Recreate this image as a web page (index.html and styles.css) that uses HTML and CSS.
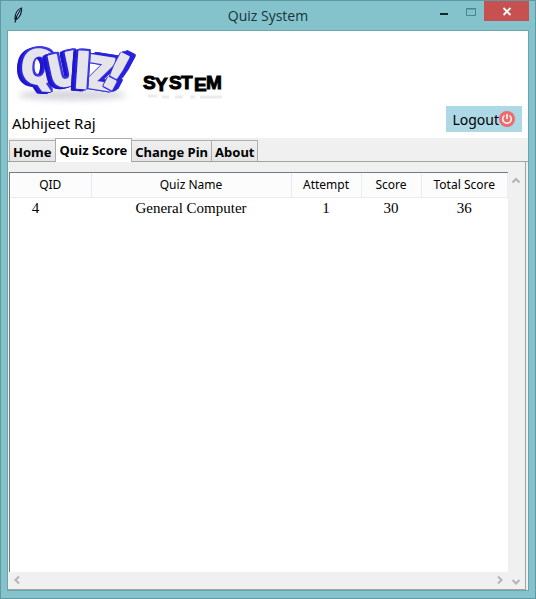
FILE: index.html
```html
<!DOCTYPE html>
<html lang="en">
<head>
<meta charset="utf-8">
<title>Quiz System</title>
<link rel="stylesheet" href="styles.css">
</head>
<body>
<div class="window">
  <header class="titlebar">
    <svg class="feather" viewBox="0 0 10 16" aria-hidden="true">
      <path d="M8.500 1C5 2 2 6 2 12L4 12C7 10 9 5 8.500 1Z" fill="#a9d4ee" stroke="#12202c" stroke-width="1.3"/>
      <path d="M7.500 2.500C5 6 3 10 2 15.500" fill="none" stroke="#0c1720" stroke-width="1.2"/>
    </svg>
    <h1 class="caption">Quiz System</h1>
    <div class="controls">
      <button class="control" type="button" aria-label="Minimize"><svg viewBox="0 0 26 20"><path d="M8 13H16" stroke="#14282b" stroke-width="2"/></svg></button>
      <button class="control" type="button" aria-label="Maximize"><svg viewBox="0 0 26 20"><path d="M8.500 7.500H17.500V14.500H8.500ZM8 8H18" fill="none" stroke="#4b858c"/></svg></button>
      <button class="control close" type="button" aria-label="Close"><svg viewBox="0 0 45 20"><path d="M19.500 7L26.500 14M26.500 7L19.500 14" stroke="#fff" stroke-width="1.8"/></svg></button>
    </div>
  </header>
  <main class="client">
    <section class="banner">
      <svg class="logo" viewBox="0 0 224 75" role="img" aria-label="Quiz! System">
        <defs>
          <filter id="soft" x="-20%" y="-150%" width="140%" height="400%"><feGaussianBlur stdDeviation="3"/></filter>
        </defs>
        <ellipse cx="64" cy="64" rx="54" ry="5" fill="#d4d4da" filter="url(#soft)"/>
        <g class="left">
          <text class="letter q" x="13" y="52" transform="rotate(5 28 36)">Q</text>
        </g>
        <g class="left">
          <text class="letter u" x="40" y="55" transform="rotate(-12 54 38)">U</text>
        </g>
        <g class="right">
          <text class="letter z" x="78" y="57" transform="rotate(9 88 38)">Z</text>
        </g>
        <g class="left">
          <text class="letter i" x="66" y="57" transform="rotate(4 72 38)">I</text>
        </g>
        <g class="right">
          <text class="letter bang" x="99" y="57" transform="rotate(28 106 38)">!</text>
        </g>
        <path d="M140 65H149M154 66H161M167 66H175M182 66H187M192 66H214" fill="none" stroke="#ececec" stroke-width="3"/>
        <text class="system" x="135 147 161 173 186 198" y="58 60 58 58 60 58">SYSTEM</text>
      </svg>
      <div class="account">
        <p class="user">Abhijeet Raj</p>
        <button class="logout" type="button">Logout<svg viewBox="0 0 16 16" aria-hidden="true"><circle cx="8" cy="8" r="8" fill="#f0696b"/><path d="M5.500 4.500A4.300 4.300 0 1 0 10.500 4.500M8 3V8" fill="none" stroke="#fff" stroke-width="1.500"/></svg></button>
      </div>
    </section>
    <nav class="tabs" role="tablist">
      <button class="tab" type="button" role="tab">Home</button>
      <button class="tab active" type="button" role="tab" aria-selected="true">Quiz Score</button>
      <button class="tab" type="button" role="tab">Change Pin</button>
      <button class="tab" type="button" role="tab">About</button>
    </nav>
    <section class="page">
      <div class="tree">
        <table class="scores">
          <colgroup><col class="c-id"><col class="c-name"><col class="c-attempt"><col class="c-score"><col></colgroup>
          <thead><tr><th>QID</th><th>Quiz Name</th><th>Attempt</th><th>Score</th><th>Total Score</th></tr></thead>
          <tbody><tr><td class="first">4</td><td>General Computer</td><td>1</td><td>30</td><td>36</td></tr></tbody>
        </table>
      </div>
      <div class="vbar">
        <button class="arrow" type="button" aria-label="Scroll up"><svg viewBox="0 0 16 16"><path d="M4.500 10.500L8 7L11.500 10.500"/></svg></button>
        <button class="arrow" type="button" aria-label="Scroll down"><svg viewBox="0 0 16 16"><path d="M4.500 7L8 10.500L11.500 7"/></svg></button>
      </div>
      <div class="hbar">
        <button class="arrow" type="button" aria-label="Scroll left"><svg viewBox="0 0 16 16"><path d="M10 4.500L6.500 8L10 11.500"/></svg></button>
        <button class="arrow" type="button" aria-label="Scroll right"><svg viewBox="0 0 16 16"><path d="M6 4.500L9.500 8L6 11.500"/></svg></button>
      </div>
    </section>
  </main>
</div>
</body>
</html>
```
FILE: styles.css
```css
* { box-sizing: border-box; }

body {
  margin: 0;
  font-family: "Noto Sans", "Open Sans", sans-serif;
  color: #000;
}

button {
  margin: 0;
  padding: 0;
  border: 0;
  background: none;
  font: inherit;
  color: inherit;
}

svg { display: block; }

.window {
  display: flex;
  flex-direction: column;
  min-height: 100vh;
  padding: 0 6px 7px;
  border: 1px solid #5f9aa2;
  background: #84c3cb;
}

/* Title bar */
.titlebar {
  display: grid;
  grid-template-columns: 1fr auto 1fr;
  height: 29px;
}

.feather {
  width: 10px;
  height: 16px;
  margin: 6px 0 0 6px;
}

.caption {
  margin: 0;
  font: 14px/29px "Open Sans", sans-serif;
  color: #17353a;
}

.controls {
  display: flex;
  justify-content: flex-end;
  align-items: flex-start;
}

.control { width: 26px; height: 20px; }
.control svg { width: 100%; height: 100%; }
.close { width: 45px; background: #c75050; }

/* Client area */
.client {
  display: flex;
  flex: 1;
  flex-direction: column;
  border: 1px solid #6da3aa;
  background: #f0f0f0;
}

.banner {
  display: flex;
  flex-direction: column;
  height: 107px;
  background: #fff;
}

.logo { width: 224px; height: 75px; overflow: visible; }

/* Light letter faces; the blue sides are stacked shadows */
.letter {
  font-family: "Liberation Sans Narrow", "DejaVu Sans Condensed", sans-serif;
  font-weight: bold;
  fill: #e4e4ea;
  stroke: #e4e4ea;
  stroke-width: 2px;
  stroke-linejoin: round;
}

.q { font-size: 46px; }
.u { font-size: 44px; }
.i { font-size: 50px; }
.z { font-size: 44px; }
.bang { font-size: 50px; }

.left {
  filter: drop-shadow(2px 0 0 #3a35e6) drop-shadow(0 -2px 0 #3a35e6) drop-shadow(-2px 1px 0 #2a22dc) drop-shadow(-3px 1px 0 #1d16cc);
}

.right {
  filter: drop-shadow(-1px 0 0 #3a35e6) drop-shadow(0 1px 0 #3a35e6) drop-shadow(2px -1px 0 #2a22dc) drop-shadow(4px -1px 0 #2a22dc);
}

.system {
  font: bold 19px "Liberation Sans", sans-serif;
  stroke: #000;
  stroke-width: 1px;
}

.account {
  display: flex;
  flex: 1;
  justify-content: space-between;
  padding: 0 6px 4px 4px;
}

.user { margin: 0; align-self: flex-end; font-size: 15px; line-height: 22px; }

.logout {
  display: flex;
  align-items: center;
  height: 26px;
  padding: 0 7px 0 6px;
  background: #add8e6;
  font-size: 14px;
}

.logout svg { width: 16px; height: 16px; }

/* Tabs */
.tabs {
  display: flex;
  align-items: flex-end;
  height: 24px;
  padding-left: 1px;
  border-bottom: 1px solid #a0a5a0;
}

.tab {
  height: 21px;
  padding: 0 3px;
  border: 1px solid #acacac;
  border-width: 1px 1px 0;
  background: linear-gradient(#f0f0f0, #e4e4e4);
  font: bold 13px/23px "Noto Sans", sans-serif;
}

.tab + .tab { margin-left: -1px; }

.active {
  z-index: 1;
  height: 24px;
  margin-bottom: -1px;
  padding: 0 4px;
  background: #fff;
}

/* Score table and scroll bars */
.page {
  display: grid;
  flex: 1;
  grid-template-columns: 1fr 17px;
  grid-template-rows: 1fr 17px;
  margin-right: 2px;
  padding: 10px 0 0 1px;
  border-right: 1px solid #a0a5a0;
  border-bottom: 1px solid #a0a5a0;
}

.tree {
  border: 1px solid #767b83;
  border-width: 1px 0 0 1px;
  background: #fff;
}

.scores {
  width: 100%;
  table-layout: fixed;
  border-collapse: collapse;
}

.c-id { width: 81px; }
.c-name { width: 200px; }
.c-attempt { width: 70px; }
.c-score { width: 60px; }

.scores th {
  height: 24px;
  padding: 0;
  border-right: 1px solid #e8edf2;
  border-bottom: 1px solid #ececec;
  background: #fcfcfd;
  font-size: 12px;
  font-weight: normal;
  line-height: 22px;
}

.scores td {
  height: 20px;
  padding: 0;
  font: 15px/20px "Liberation Serif", serif;
  text-align: center;
}

.scores .first { padding-right: 30px; }

.vbar {
  display: flex;
  grid-row: 1 / 3;
  grid-column: 2;
  flex-direction: column;
  justify-content: space-between;
}

.hbar { display: flex; justify-content: space-between; }

.arrow { width: 16px; height: 16px; }

.arrow path {
  fill: none;
  stroke: #b4b4b4;
  stroke-width: 2px;
}
```
